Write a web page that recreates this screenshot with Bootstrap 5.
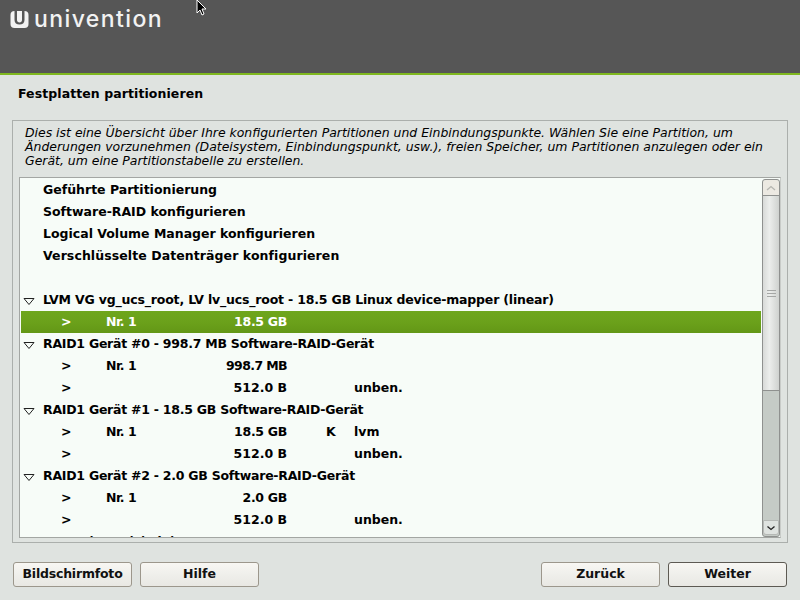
<!DOCTYPE html>
<html lang="de">
<head>
<meta charset="utf-8">
<title>Festplatten partitionieren</title>
<link rel="stylesheet" href="https://cdn.jsdelivr.net/npm/bootstrap@5.3.0/dist/css/bootstrap.min.css">
<style>
html,body{height:600px;overflow:hidden}
body{width:800px;background:#dfe3e0;font-family:"DejaVu Sans",sans-serif;font-size:13px;color:#000;line-height:1.2}
.topband{height:75px;background:#565656;border-bottom:2px solid #7fb81f;padding:10px 0 0 10px;position:relative}
.logotext{color:#f2f2f2;font-family:"Inter",sans-serif;font-weight:500;font-size:23px;line-height:18px;letter-spacing:1.4px;margin-left:1px}
.cursor{position:absolute;left:196px;top:-1px}
.pagetitle{font-weight:700;font-size:12.5px;letter-spacing:.08px;padding:11px 18px 0;height:45px;line-height:15px}
.framebox{margin:0 12px;height:423px;border:1px solid #abafac;padding:5px 6px 0}
.intro{font-style:italic;font-size:12.44px;line-height:14px;padding-left:6px;height:51px;white-space:nowrap}
.listbox{height:361px;border:1px solid #a3a6a3;border-right-color:#c8cbc8;background:#f7fcf8;overflow:hidden}
.rowsarea{padding:1px 1px 0 1px;overflow:hidden;width:742px}
.treerow{height:22px;font-weight:700;font-size:12.5px;line-height:21px;position:relative;white-space:pre}
.treerow.active{background:linear-gradient(#6ea61c,#6ba11b 50%,#639716);color:#fff}
.col-tri{width:22px}.col-arrow{width:85px;padding-left:40px}.col-nr{width:105px;letter-spacing:-.5px}.col-size{width:76px;text-align:right}
.col-size.narrow{letter-spacing:-.3px}.col-size.narrower{letter-spacing:-.6px}
.col-k{width:67px;padding-left:39px}
.tri{margin-left:2px;margin-top:1px}
.wide-one{letter-spacing:.08px}
.tight-lvm{letter-spacing:-.18px}
.tight-raid{letter-spacing:-.25px}
.sbar{width:18px;margin:1px 0 0 auto;background:#c5cbc6;border:1px solid #8f918f;border-radius:3px;height:358px;flex:none}
.sbtn{height:15px;background:#ece9e2;display:flex;align-items:center;justify-content:center;border-radius:3px 3px 0 0}
.sbtn.down{background:#dfe3e0;border:1px solid #b5b8b5;border-radius:0 0 3px 3px}
.thumb{height:196px;background:linear-gradient(90deg,#d8dad8,#eceeec 40%,#cfd2cf);border-top:1px solid #8f918f;border-bottom:1px solid #8f918f;display:flex;align-items:center;justify-content:center}
.track{height:129px}
.grip{width:9px;height:7px;border-top:1px solid #a5a7a5;border-bottom:1px solid #a5a7a5;position:relative}
.grip::after{content:"";position:absolute;left:0;right:0;top:2px;border-top:1px solid #a5a7a5}
.footbar{padding:0 13px;margin-top:19px}
.gbtn{width:119px;height:25px;padding:0 0 2px;background:linear-gradient(#f8f7f3,#efefeb 50%,#e9e8e3);border:1px solid #9c978c;border-radius:3px;font-weight:700;font-size:12.5px;color:#111;line-height:20px}
.gbtn.wide{letter-spacing:-.2px}
.gbtn.current{border-color:#5d5a53}
.gbtn:hover{background:linear-gradient(#f8f7f3,#efefeb 50%,#e9e8e3);border-color:#9c978c}
</style>
</head>
<body>
<div class="topband d-flex align-items-start gap-1">
<svg width="19" height="19" viewBox="0 0 19 19"><rect x="0.500" y="1" width="18" height="17" rx="4" fill="#f2f2f2"/><path d="M4.500 1h10v9c0 3-2 4.500-5 4.500s-5-1.500-5-4.500z" fill="#565656"/><path d="M7 1h5v9c0 1.500-1 2.500-2.500 2.500S7 11.500 7 10z" fill="#f2f2f2"/></svg>
<span class="logotext">univention</span>
<svg class="cursor" width="12" height="17" viewBox="0 0 12 17"><path d="M1 1v13l3-3 2 5 2-1-2-5h4z" fill="#000" stroke="#fff" stroke-width="1"/></svg>
</div>
<div class="pagetitle">Festplatten partitionieren</div>
<div class="framebox">
<div class="intro">Dies ist eine Übersicht über Ihre konfigurierten Partitionen und Einbindungspunkte. Wählen Sie eine Partition, um<br>Änderungen vorzunehmen (Dateisystem, Einbindungspunkt, usw.), freien Speicher, um Partitionen anzulegen oder ein<br>Gerät, um eine Partitionstabelle zu erstellen.</div>
<div class="listbox d-flex">
<div class="rowsarea">
<div class="treerow d-flex"><span class="col-tri"></span>Geführte Partitionierung</div>
<div class="treerow d-flex"><span class="col-tri"></span>Software-RAID konfigurieren</div>
<div class="treerow d-flex"><span class="col-tri"></span>Logical Volume Manager konfigurieren</div>
<div class="treerow d-flex wide-one"><span class="col-tri"></span>Verschlüsselte Datenträger konfigurieren</div>
<div class="treerow d-flex"></div>
<div class="treerow d-flex tight-lvm"><span class="col-tri"><svg class="tri" width="12" height="9" viewBox="0 0 12 9"><path d="M1 1.500h10L6 7.500z" fill="none" stroke="#222"/></svg></span>LVM VG vg_ucs_root, LV lv_ucs_root - 18.5 GB Linux device-mapper (linear)</div>
<div class="treerow d-flex active"><span class="col-arrow">&gt;</span><span class="col-nr">Nr. 1</span><span class="col-size narrow">18.5 GB</span></div>
<div class="treerow d-flex tight-raid"><span class="col-tri"><svg class="tri" width="12" height="9" viewBox="0 0 12 9"><path d="M1 1.500h10L6 7.500z" fill="none" stroke="#222"/></svg></span>RAID1 Gerät #0 - 998.7 MB Software-RAID-Gerät</div>
<div class="treerow d-flex"><span class="col-arrow">&gt;</span><span class="col-nr">Nr. 1</span><span class="col-size narrower">998.7 MB</span></div>
<div class="treerow d-flex"><span class="col-arrow">&gt;</span><span class="col-nr"></span><span class="col-size">512.0 B</span><span class="col-k"></span><span>unben.</span></div>
<div class="treerow d-flex tight-raid"><span class="col-tri"><svg class="tri" width="12" height="9" viewBox="0 0 12 9"><path d="M1 1.500h10L6 7.500z" fill="none" stroke="#222"/></svg></span>RAID1 Gerät #1 - 18.5 GB Software-RAID-Gerät</div>
<div class="treerow d-flex"><span class="col-arrow">&gt;</span><span class="col-nr">Nr. 1</span><span class="col-size narrow">18.5 GB</span><span class="col-k">K</span><span>lvm</span></div>
<div class="treerow d-flex"><span class="col-arrow">&gt;</span><span class="col-nr"></span><span class="col-size">512.0 B</span><span class="col-k"></span><span>unben.</span></div>
<div class="treerow d-flex tight-raid"><span class="col-tri"><svg class="tri" width="12" height="9" viewBox="0 0 12 9"><path d="M1 1.500h10L6 7.500z" fill="none" stroke="#222"/></svg></span>RAID1 Gerät #2 - 2.0 GB Software-RAID-Gerät</div>
<div class="treerow d-flex"><span class="col-arrow">&gt;</span><span class="col-nr">Nr. 1</span><span class="col-size narrow">2.0 GB</span></div>
<div class="treerow d-flex"><span class="col-arrow">&gt;</span><span class="col-nr"></span><span class="col-size">512.0 B</span><span class="col-k"></span><span>unben.</span></div>
<div class="treerow d-flex"><span class="col-tri"></span>SCSI1 (0,0,0) (sda)</div>
</div>
<div class="sbar">
<div class="sbtn"><svg width="10" height="6" viewBox="0 0 10 6"><path d="M1 5l4-3.500L9 5" fill="none" stroke="#b5b5b0" stroke-width="1.300"/></svg></div>
<div class="thumb"><div class="grip"></div></div>
<div class="track"></div>
<div class="sbtn down"><svg width="10" height="6" viewBox="0 0 10 6"><path d="M1.500 1.500L5 4.500l3.500-3" fill="none" stroke="#222" stroke-width="1.300"/></svg></div>
</div>
</div>
</div>
<div class="footbar d-flex">
<button type="button" class="btn gbtn wide">Bildschirmfoto</button>
<button type="button" class="btn gbtn ms-2">Hilfe</button>
<button type="button" class="btn gbtn ms-auto">Zurück</button>
<button type="button" class="btn gbtn current ms-2">Weiter</button>
</div>
</body>
</html>
